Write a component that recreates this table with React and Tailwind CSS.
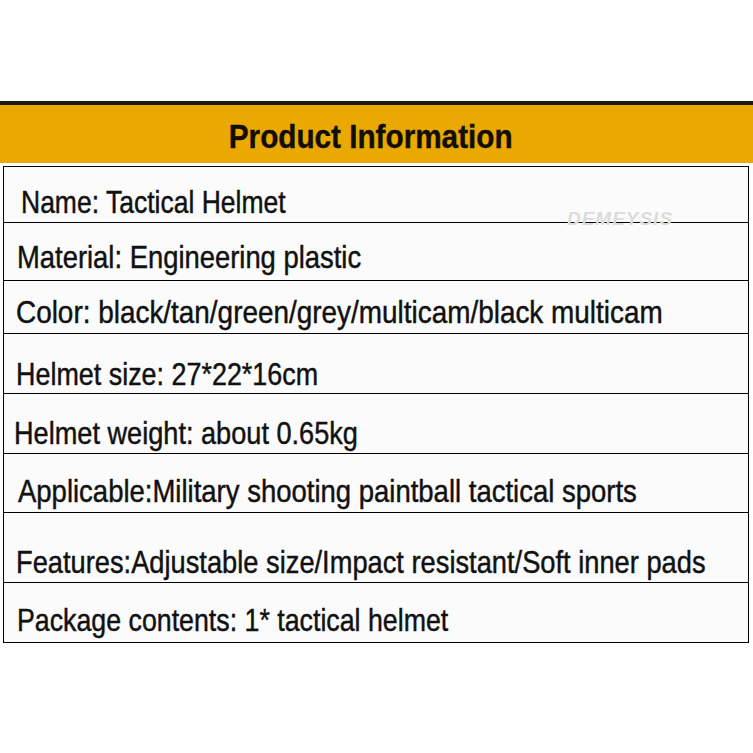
import React from "react";

const rows = [
  { text: "Name: Tactical Helmet", h: "h-[56px]", pt: "pt-[19px]", pl: "pl-[17px]", sx: "scale-x-[0.828]" },
  { text: "Material: Engineering plastic", h: "h-[58px]", pt: "pt-[18px]", pl: "pl-[13px]", sx: "scale-x-[0.856]" },
  { text: "Color: black/tan/green/grey/multicam/black multicam", h: "h-[53px]", pt: "pt-[15px]", pl: "pl-[12px]", sx: "scale-x-[0.872]" },
  { text: "Helmet size: 27*22*16cm", h: "h-[60px]", pt: "pt-[24px]", pl: "pl-[12px]", sx: "scale-x-[0.841]" },
  { text: "Helmet weight: about 0.65kg", h: "h-[60px]", pt: "pt-[23px]", pl: "pl-[10px]", sx: "scale-x-[0.848]" },
  { text: "Applicable:Military shooting paintball tactical sports", h: "h-[59px]", pt: "pt-[21px]", pl: "pl-[14px]", sx: "scale-x-[0.859]" },
  { text: "Features:Adjustable size/Impact resistant/Soft inner pads", h: "h-[70px]", pt: "pt-[33px]", pl: "pl-[12px]", sx: "scale-x-[0.852]" },
  { text: "Package contents: 1* tactical helmet", h: "h-[60px]", pt: "pt-[21px]", pl: "pl-[13px]", sx: "scale-x-[0.836]" },
];

export default function App() {
  return (
    <div className="w-[753px] h-[753px] bg-white overflow-hidden font-['Liberation_Sans',Arial,sans-serif] text-[#111]">
      <div className="h-[101px]" />
      <div className="h-[4px] bg-[#1b1916]" />
      <div className="h-[58px] bg-[#e9a900] flex justify-center pt-[15px] pr-[11px]">
        <span className="text-[33px] leading-[33px] font-bold text-[#120e06] whitespace-nowrap scale-x-[0.9] origin-center [-webkit-text-stroke:0.4px_#120e06]">
          Product Information
        </span>
      </div>
      <div className="relative mt-[3px] ml-[3px] w-[746px] border-t border-l border-r border-black bg-[#fbfbfb]">
        {rows.map((r, i) => (
          <div key={i} className={`${r.h} ${r.pt} ${r.pl} border-b border-black box-border whitespace-nowrap`}>
            <div className={`text-[32px] leading-[32px] ${r.sx} origin-left w-max [-webkit-text-stroke:0.45px_#111]`}>{r.text}</div>
          </div>
        ))}
        <div className="absolute left-[563px] top-[43px] text-[18px] leading-[18px] font-bold italic tracking-[1px] text-[#dcdcdc] scale-x-[1.05] origin-left">
          DEMEYSIS
        </div>
      </div>
    </div>
  );
}
